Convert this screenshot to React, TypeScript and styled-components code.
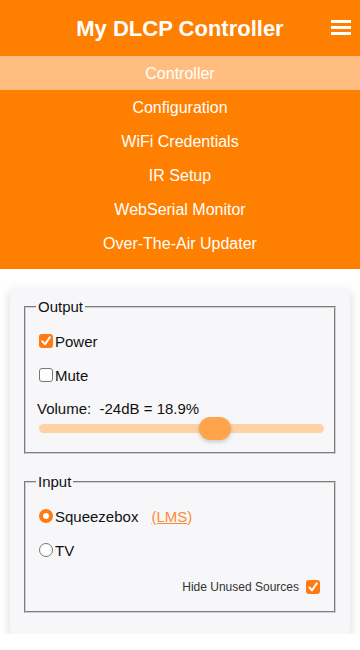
import React from "react";
import styled, { createGlobalStyle } from "styled-components";

const Global = createGlobalStyle`
  html, body { margin: 0; padding: 0; background: #ffffff; }
  body { font-family: "Liberation Sans", Arial, sans-serif; color: #111; }
  * { box-sizing: border-box; }
`;

const ORANGE = "#ff8000";

const Header = styled.header`
  background: ${ORANGE};
  padding-bottom: 9px;
`;

const TitleBar = styled.div`
  height: 56px;
  display: grid;
  grid-template-columns: 1fr auto 1fr;
  align-items: center;
`;

const Title = styled.h1`
  grid-column: 2;
  margin: 0;
  color: #fff;
  font-size: 22px;
  font-weight: bold;
  line-height: 26px;
  padding-top: 1px;
`;

const Burger = styled.div`
  grid-column: 3;
  justify-self: end;
  margin-right: 9px;
  display: flex;
  align-items: center;
  margin-top: -2px;
`;

const Nav = styled.nav`
  display: flex;
  flex-direction: column;
`;

const NavItem = styled.a<{ $active?: boolean }>`
  display: flex;
  align-items: center;
  justify-content: center;
  height: 34px;
  padding-top: 2px;
  color: #fff;
  font-size: 16px;
  text-decoration: none;
  background: ${(p) => (p.$active ? "#ffbe80" : "transparent")};
`;

const Panel = styled.main`
  margin: 20px 10px 0;
  background: #f7f7f9;
  box-shadow: 0 3px 10px rgba(0, 0, 0, 0.16);
  padding: 9px 14px 21px;
  display: flex;
  flex-direction: column;
  gap: 19px;
`;

const Group = styled.fieldset`
  margin: 0;
  border: 2px groove #d0d0d0;
  padding: 8px 10px 12px 13px;
  min-width: 0;
`;

const Legend = styled.legend`
  font-size: 15px;
  line-height: 18px;
  padding: 0 2px;
  margin-left: -3px;
  color: #111;
`;

const Row = styled.label`
  height: 34px;
  display: flex;
  align-items: center;
  font-size: 15px;
  color: #111;
  gap: 2px;
`;

const BoxMark = styled.span<{ $on: boolean }>`
  width: 14px;
  height: 14px;
  border-radius: 3px;
  flex: none;
  display: inline-flex;
  align-items: center;
  justify-content: center;
  background: ${(p) => (p.$on ? "#ff7a12" : "#fff")};
  border: ${(p) => (p.$on ? "none" : "1px solid #777")};
`;

const RadioMark = styled.span<{ $on: boolean }>`
  width: 14px;
  height: 14px;
  border-radius: 50%;
  flex: none;
  background: #fff;
  border: ${(p) => (p.$on ? "4px solid #ff7a12" : "1px solid #777")};
`;

const Check = ({ on }: { on: boolean }) => (
  <BoxMark $on={on}>
    {on && (
      <svg width="14" height="14" viewBox="0 0 14 14">
        <polyline points="3.2,7.2 6,10.3 10.8,3.4" fill="none" stroke="#fff" strokeWidth="2" strokeLinecap="round" strokeLinejoin="round" />
      </svg>
    )}
  </BoxMark>
);

const VolumeBlock = styled.div`
  margin-top: 8px;
`;

const VolumeLabel = styled.div`
  font-size: 15px;
  line-height: 17px;
  margin-left: -2px;
  white-space: pre;
`;

const SliderWrap = styled.div`
  position: relative;
  height: 23px;
  display: flex;
  align-items: center;
`;

const Track = styled.div`
  width: 100%;
  height: 9px;
  border-radius: 5px;
  background: #ffd2a6;
`;

const Thumb = styled.div`
  position: absolute;
  top: 0;
  width: 32px;
  height: 23px;
  border-radius: 12px;
  background: #ffa44a;
  box-shadow: 0 2px 4px rgba(0, 0, 0, 0.18);
`;

const Link = styled.a`
  color: #ff8a33;
  text-decoration: underline;
  margin-left: 11px;
`;

const HideRow = styled.label`
  margin-top: 8px;
  height: 24px;
  display: flex;
  align-items: center;
  justify-content: flex-end;
  gap: 7px;
  font-size: 12px;
  color: #333;
  padding-right: 4px;
`;

const navItems = [
  "Controller",
  "Configuration",
  "WiFi Credentials",
  "IR Setup",
  "WebSerial Monitor",
  "Over-The-Air Updater",
];

export default function App() {
  const volumePct = 0.632;
  return (
    <>
      <Global />
      <Header>
        <TitleBar>
          <Title>My DLCP Controller</Title>
          <Burger>
            <svg width="20" height="15" viewBox="0 0 20 15">
              <rect x="0" y="0" width="20" height="3" fill="#fff" />
              <rect x="0" y="6" width="20" height="3" fill="#fff" />
              <rect x="0" y="12" width="20" height="3" fill="#fff" />
            </svg>
          </Burger>
        </TitleBar>
        <Nav>
          {navItems.map((n, i) => (
            <NavItem key={n} $active={i === 0}>
              {n}
            </NavItem>
          ))}
        </Nav>
      </Header>
      <Panel>
        <Group>
          <Legend>Output</Legend>
          <Row>
            <Check on={true} />
            Power
          </Row>
          <Row>
            <Check on={false} />
            Mute
          </Row>
          <VolumeBlock>
            <VolumeLabel>{"Volume:  -24dB = 18.9%"}</VolumeLabel>
            <SliderWrap>
              <Track />
              <Thumb style={{ left: `calc(${volumePct} * (100% - 32px))` }} />
            </SliderWrap>
          </VolumeBlock>
        </Group>
        <Group>
          <Legend>Input</Legend>
          <Row>
            <RadioMark $on={true} />
            Squeezebox
            <Link>(LMS)</Link>
          </Row>
          <Row>
            <RadioMark $on={false} />
            TV
          </Row>
          <HideRow>
            Hide Unused Sources
            <Check on={true} />
          </HideRow>
        </Group>
      </Panel>
    </>
  );
}
